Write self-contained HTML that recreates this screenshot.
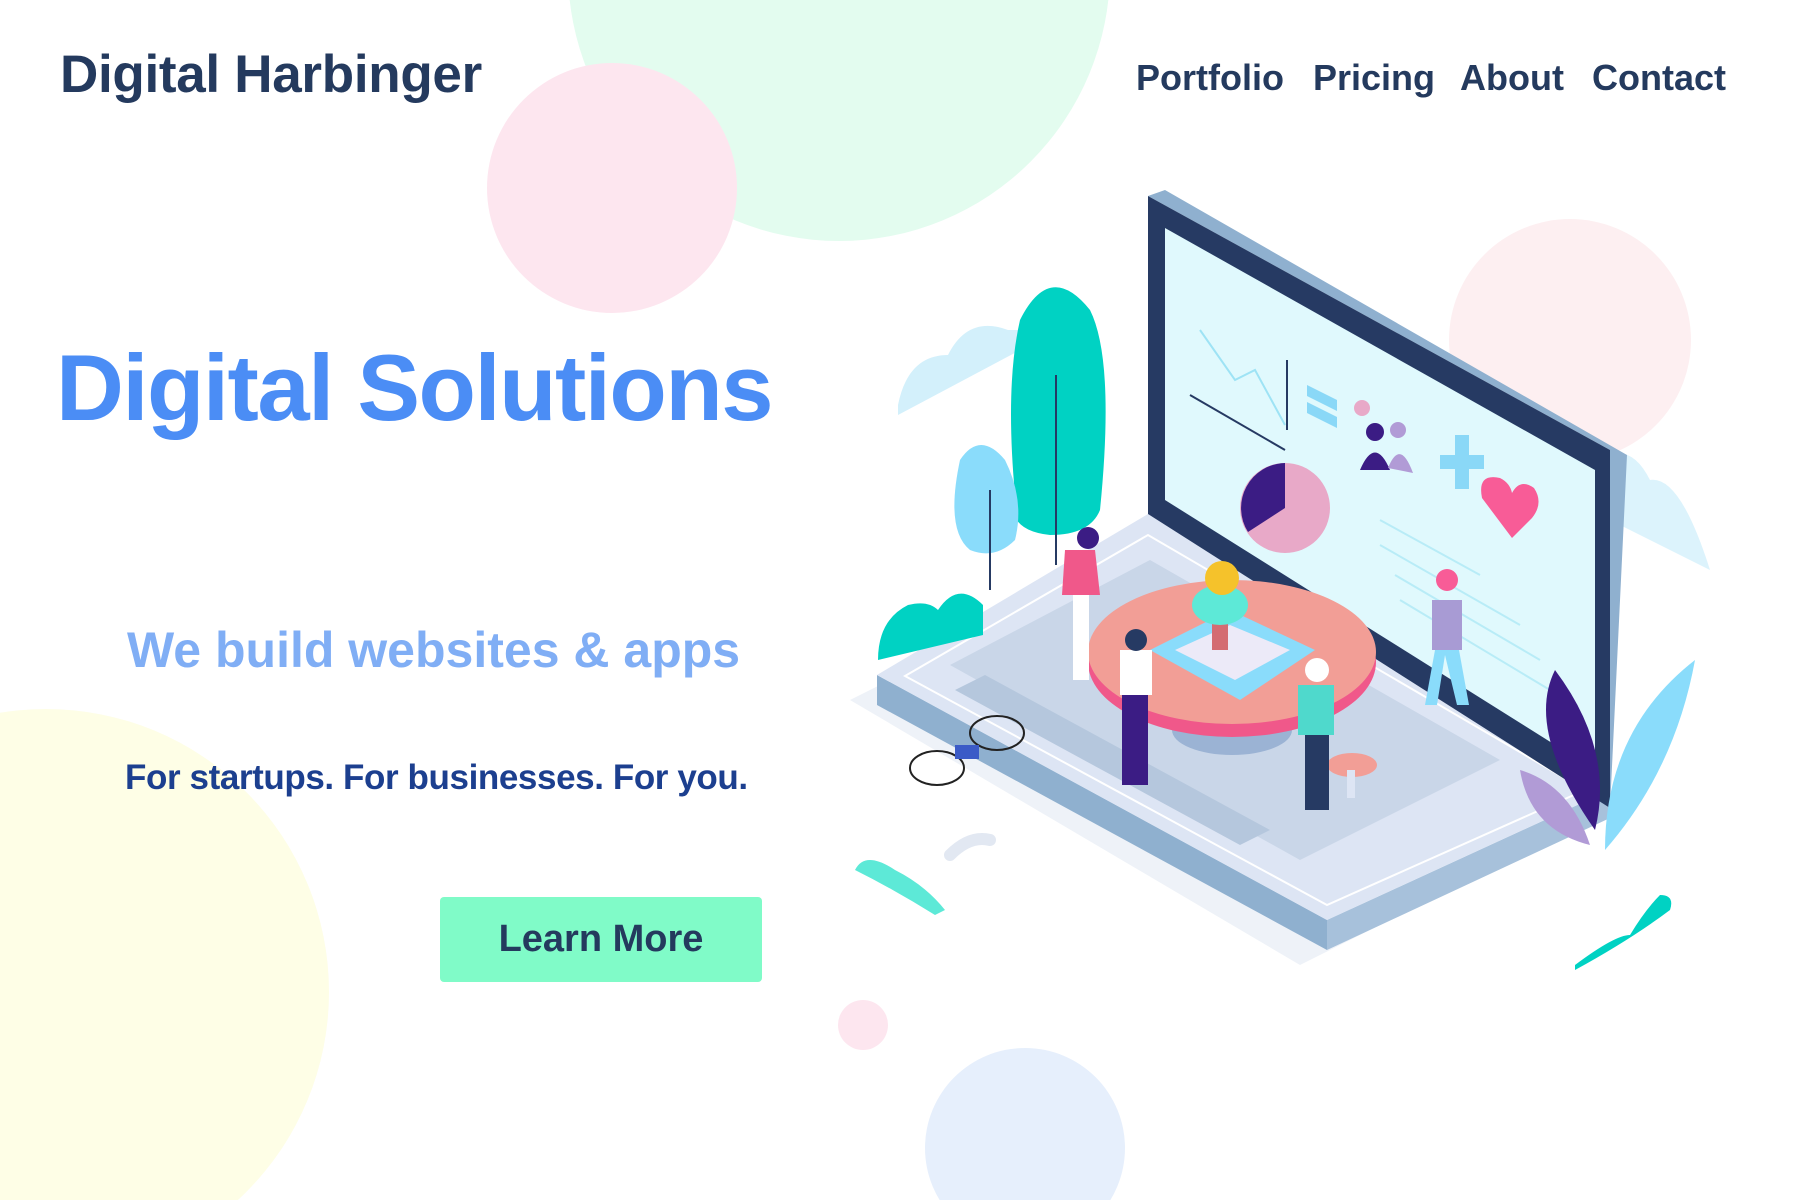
<!DOCTYPE html>
<html><head><meta charset="utf-8"><style>
html,body{margin:0;padding:0;width:1800px;height:1200px;overflow:hidden;}
body{position:relative;background:#fff;font-family:"Liberation Sans",sans-serif;font-weight:bold;}
svg.bg{position:absolute;left:0;top:0;display:block;}
.t{position:absolute;white-space:nowrap;}
.logo{left:60px;top:44px;font-size:53px;color:#243a5e;letter-spacing:-0.3px;}
.nav{top:57px;font-size:36px;color:#243a5e;}
.h1{left:56px;top:334px;font-size:94px;color:#4b8df5;letter-spacing:-1.5px;}
.h2{left:127px;top:621px;font-size:50px;color:#80aef5;}
.h3{left:125px;top:758px;font-size:35px;color:#1c3f8f;letter-spacing:-0.4px;}
.btn{position:absolute;left:440px;top:897px;width:322px;height:85px;background:#80fbc8;border-radius:4px;color:#243a5e;font-size:38px;text-align:center;line-height:85px;}
</style></head><body>
<svg class="bg" width="1800" height="1200" viewBox="0 0 1800 1200">
<circle cx="839" cy="-30" r="271" fill="#e3fcef"/>
<circle cx="612" cy="188" r="125" fill="#fde6ef"/>
<circle cx="1570" cy="340" r="121" fill="#fdeff1"/>
<circle cx="46" cy="992" r="283" fill="#fefee6"/>
<circle cx="1025" cy="1148" r="100" fill="#e6effc"/>
<circle cx="863" cy="1025" r="25" fill="#fde6ef"/>
<path d="M898 405 q10-50 50-50 q20-40 60-25 l50 0 l-160 85z" fill="#d3f0fb"/>
<path d="M1550 470 q20-30 50-10 q30-20 50 20 q30-5 60 90 l-160-80z" fill="#d3f0fb" opacity="0.8"/>
<polygon points="850,700 1300,965 1380,925 930,660" fill="#eef2f8"/>
<polygon points="877,675 1327,920 1327,950 877,705" fill="#8fb0cf"/>
<polygon points="1327,920 1610,790 1610,818 1327,950" fill="#a7c1db"/>
<polygon points="877,675 1148,514 1610,790 1327,920" fill="#dde5f4"/>
<polygon points="905,676 1148,535 1585,790 1327,905" fill="none" stroke="#fff" stroke-width="2"/>
<polygon points="950,665 1150,560 1500,760 1300,860" fill="#c9d6e8"/>
<polygon points="955,690 1240,845 1270,830 985,675" fill="#b5c7dd"/>
<polygon points="1148,196 1165,190 1627,455 1610,808 1610,450" fill="#8fb0cf"/>
<polygon points="1148,196 1610,450 1610,808 1148,514" fill="#263a63"/>
<polygon points="1165,228 1595,470 1595,770 1165,500" fill="#e0f9fd"/>
<polyline points="1200,330 1235,380 1255,370 1285,425" fill="none" stroke="#9ee3f5" stroke-width="2"/>
<line x1="1287" y1="360" x2="1287" y2="430" stroke="#263a63" stroke-width="2"/>
<line x1="1190" y1="395" x2="1285" y2="450" stroke="#263a63" stroke-width="2"/>
<polygon points="1307,385 1337,400 1337,411 1307,396" fill="#8ad8f7"/>
<polygon points="1307,402 1337,417 1337,428 1307,413" fill="#8ad8f7"/>
<circle cx="1285" cy="508" r="45" fill="#e8a9c8"/>
<path d="M1285 508 L1285 463 A45 45 0 0 0 1248 532 Z" fill="#3b1c84"/>
<circle cx="1362" cy="408" r="8" fill="#e8a9c8"/><circle cx="1375" cy="432" r="9" fill="#3b1c84"/>
<path d="M1360 470 q15-35 30 0z" fill="#3b1c84"/><circle cx="1398" cy="430" r="8" fill="#b19bd6"/>
<path d="M1388 468 q12-30 25 5z" fill="#b19bd6"/>
<path d="M1440 455 h15 v-20 h14 v20 h15 v14 h-15 v20 h-14 v-20 h-15z" fill="#8ad8f7"/>
<path d="M1512 538 l-30-40 q-5-25 18-20 q10 5 12 15 q8-15 22-5 q10 15-2 30z" fill="#f85c97"/>
<g stroke="#b8ecf7" stroke-width="2"><line x1="1380" y1="520" x2="1480" y2="575"/><line x1="1380" y1="545" x2="1520" y2="625"/><line x1="1395" y1="575" x2="1540" y2="660"/><line x1="1400" y1="600" x2="1550" y2="690"/></g>
<path d="M1020 320 q30-60 70-10 q25 50 10 200 q-10 25 -50 25 q-45-5-35-40 q-10-110 5-175z" fill="#00d2c3"/>
<line x1="1056" y1="375" x2="1056" y2="565" stroke="#263a63" stroke-width="2"/>
<path d="M960 460 q20-30 45 0 q20 40 10 80 q-20 20-45 10 q-25-20-10-90z" fill="#8adcfb"/>
<line x1="990" y1="490" x2="990" y2="590" stroke="#263a63" stroke-width="2"/>
<path d="M878 660 q0-40 30-55 q20-5 30 5 q20-30 45-5 l0 30 z" fill="#00d2c3"/>
<path d="M1575 965 q40-30 55-30 q15-25 30-40 q15 0 10 15 q-40 30 -95 60z" fill="#00d2c3"/>
<path d="M855 870 q10-20 40 0 q30 15 50 40 l-10 5 q-40-25 -80-45z" fill="#5de9d7"/>
<path d="M1605 850 q0-120 90-190 q-20 110 -90 190z" fill="#8adcfb"/>
<path d="M1595 830 q20-80-40-160 q-30 60 40 160z" fill="#3b1c84"/>
<path d="M1590 845 q-20-60-70-75 q10 60 70 75z" fill="#b19bd6"/>
<ellipse cx="1232" cy="730" rx="60" ry="25" fill="#9bb3d4"/>
<ellipse cx="1232" cy="662" rx="144" ry="75" fill="#f0588a"/>
<ellipse cx="1232" cy="652" rx="144" ry="72" fill="#f29e96"/>
<polygon points="1150,650 1230,610 1315,650 1240,700" fill="#8adcfb"/>
<polygon points="1175,650 1230,625 1290,650 1235,680" fill="#eceaf8"/>
<rect x="1212" y="610" width="16" height="40" fill="#d46c72"/>
<ellipse cx="1220" cy="605" rx="28" ry="20" fill="#5de9d7"/>
<circle cx="1222" cy="578" r="17" fill="#f5c22b"/>
<ellipse cx="1352" cy="765" rx="25" ry="12" fill="#f29e96"/>
<rect x="1347" y="770" width="8" height="28" fill="#dde5f4"/>
<rect x="1073" y="590" width="16" height="90" fill="#fff"/><path d="M1065 550 h30 l5 45 h-38z" fill="#f0588a"/><circle cx="1088" cy="538" r="11" fill="#3b1c84"/>
<rect x="1122" y="690" width="26" height="95" fill="#3b1c84"/><path d="M1120 650 h32 v45 h-32z" fill="#fff"/><circle cx="1136" cy="640" r="11" fill="#263a63"/>
<rect x="1305" y="730" width="24" height="80" fill="#263a63"/><path d="M1298 685 h36 v50 h-36z" fill="#4fd9cc"/><circle cx="1317" cy="670" r="12" fill="#fff"/>
<path d="M1435 650 l-10 55 h12 l8-50 l12 50 h12 l-10-55z" fill="#8adcfb"/><path d="M1432 600 h30 v50 h-30z" fill="#a89bd4"/><circle cx="1447" cy="580" r="11" fill="#f85c97"/>
<ellipse cx="937" cy="768" rx="27" ry="17" fill="none" stroke="#222" stroke-width="2"/>
<ellipse cx="997" cy="733" rx="27" ry="17" fill="none" stroke="#222" stroke-width="2"/>
<rect x="955" y="745" width="24" height="14" fill="#3b5bc7"/>
<path d="M950 855 q20-20 40-15" stroke="#e2e8f2" stroke-width="12" fill="none" stroke-linecap="round"/>
</svg>
<div class="t logo">Digital Harbinger</div>
<div class="t nav" style="left:1136px">Portfolio</div>
<div class="t nav" style="left:1313px">Pricing</div>
<div class="t nav" style="left:1460px">About</div>
<div class="t nav" style="left:1592px">Contact</div>
<div class="t h1">Digital Solutions</div>
<div class="t h2">We build websites &amp; apps</div>
<div class="t h3">For startups. For businesses. For you.</div>
<div class="btn">Learn More</div>
</body></html>
